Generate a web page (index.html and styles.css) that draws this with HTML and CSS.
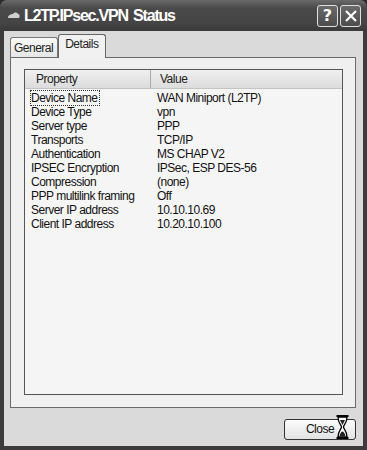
FILE: index.html
```html
<!DOCTYPE html>
<html lang="en">
  <head>
    <meta charset="UTF-8" />
    <title>L2TP.IPsec.VPN Status</title>
    <link rel="stylesheet" href="styles.css">
  </head>
  <body>
    <div class="window">
      <div class="titlebar">
        <svg class="app-icon" width="14" height="10" viewBox="0 0 14 10">
          <path d="M1 7 C1 4 4 3 6 3 C7 1 10 1 11 3 C13 3 13 6 12 7 Z" fill="#cfcfcf" />
        </svg>
        <span class="title">L2TP.IPsec.VPN Status</span>
        <div class="caption-buttons">
          <div class="cap-btn">?</div>
          <div class="cap-btn">
            <svg width="14" height="14" viewBox="0 0 14 14">
              <path d="M2 2 L12 12 M12 2 L2 12" stroke="#fff" stroke-width="2.2" />
            </svg>
          </div>
        </div>
      </div>

      <div class="client">
        <div class="tabs">
          <div class="tab">General</div>
          <div class="tab active">Details</div>
        </div>
        <div class="panel">
          <div class="listview">
            <div class="header">
              <div class="col-prop">Property</div>
              <div class="col-val">Value</div>
            </div>
            <div class="rows">
              <div class="row"><span class="prop"><span class="focus">Device Name</span></span><span class="val">WAN Miniport (L2TP)</span></div>
              <div class="row"><span class="prop">Device Type</span><span class="val">vpn</span></div>
              <div class="row"><span class="prop">Server type</span><span class="val">PPP</span></div>
              <div class="row"><span class="prop">Transports</span><span class="val">TCP/IP</span></div>
              <div class="row"><span class="prop">Authentication</span><span class="val">MS CHAP V2</span></div>
              <div class="row"><span class="prop">IPSEC Encryption</span><span class="val">IPSec, ESP DES-56</span></div>
              <div class="row"><span class="prop">Compression</span><span class="val">(none)</span></div>
              <div class="row"><span class="prop">PPP multilink framing</span><span class="val">Off</span></div>
              <div class="row"><span class="prop">Server IP address</span><span class="val">10.10.10.69</span></div>
              <div class="row"><span class="prop">Client IP address</span><span class="val">10.20.10.100</span></div>
            </div>
          </div>
        </div>
        <div class="footer">
          <div class="button">Close
            <svg class="hourglass" width="13" height="24" viewBox="0 0 13 24">
              <path d="M0.5 1 H12.5 M0.5 23 H12.5" stroke="#000" stroke-width="2" />
              <path d="M2 2 C2 8 5.5 10 5.5 12 C5.5 14 2 16 2 22 H11 C11 16 7.5 14 7.5 12 C7.5 10 11 8 11 2 Z" fill="#fff" stroke="#000" stroke-width="1.3" />
              <path d="M4 5 H9 L6.5 10 Z M3.5 21.5 C4 18 5.5 16.5 6.5 16.5 C7.5 16.5 9 18 9.5 21.5 Z" fill="#222" />
            </svg>
          </div>
        </div>
      </div>
    </div>
  </body>
</html>
```

FILE: styles.css
```css
html,
body {
  margin: 0;
  padding: 0;
  background: #2a2a2a;
}

body {
  font-family: "Liberation Sans", Arial, sans-serif;
  font-size: 12px;
  letter-spacing: -0.5px;
  color: #111;
}

.window {
  width: 367px;
  height: 450px;
  box-sizing: border-box;
  display: flex;
  flex-direction: column;
  background: #3c3c3c;
  border-radius: 7px 7px 0 0;
  overflow: hidden;
}

.titlebar {
  height: 31px;
  flex: none;
  display: flex;
  align-items: center;
  padding: 0 6px 0 7px;
  background: linear-gradient(#6a6a6a, #4a4a4a 25%, #444 75%, #3a3a3a);
}

.app-icon {
  margin-right: 3px;
  margin-top: 1px;
}

.title {
  flex: 1;
  color: #fff;
  font-family: "Liberation Sans", Arial, sans-serif;
  font-weight: bold;
  font-size: 16px;
  letter-spacing: -1.2px;
  word-spacing: 2px;
  margin-top: 1px;
}

.caption-buttons {
  display: flex;
  gap: 2px;
}

.cap-btn {
  width: 19px;
  height: 20px;
  border: 1px solid #e0e0e0;
  border-radius: 3px;
  background: linear-gradient(#6a6a6a, #4c4c4c);
  color: #fff;
  font-family: "DejaVu Sans", sans-serif;
  font-weight: bold;
  font-size: 16px;
  letter-spacing: 0;
  display: flex;
  align-items: center;
  justify-content: center;
}

.client {
  flex: 1;
  margin: 0 4px 4px 4px;
  background: #dadada;
  display: flex;
  flex-direction: column;
  padding: 2px 7px 0 6px;
}

.tabs {
  display: flex;
  align-items: flex-end;
  height: 24px;
  position: relative;
  z-index: 1;
}

.tab {
  height: 19px;
  padding: 0 4px 0 3px;
  line-height: 21px;
  border: 1px solid #777;
  border-bottom: none;
  border-radius: 3px 3px 0 0;
  background: linear-gradient(#fafafa, #e6e6e6);
  color: #222;
}

.tab.active {
  height: 23px;
  line-height: 19px;
  padding: 0 7px 0 6px;
  margin-bottom: -1px;
  background: #f1f1f1;
  border-color: #666;
}

.panel {
  height: 351px;
  box-sizing: border-box;
  border: 1px solid #6a6a6a;
  background: #f0f0f0;
  padding: 11px 12px 12px 13px;
}

.listview {
  height: 100%;
  box-sizing: border-box;
  border: 1px solid #555;
  background: #f5f5f5;
}

.header {
  display: flex;
  height: 18px;
  line-height: 19px;
  background: linear-gradient(#f0f0f0, #dcdcdc);
  border-bottom: 1px solid #c4c4c4;
  color: #222;
}

.col-prop {
  width: 126px;
  box-sizing: border-box;
  padding-left: 11px;
  border-right: 1px solid #aaa;
}

.col-val {
  padding-left: 9px;
}

.rows {
  padding-top: 2px;
}

.row {
  display: flex;
  height: 14px;
  line-height: 14px;
}

.prop {
  width: 126px;
  padding-left: 6px;
  flex: none;
}

.focus {
  outline: 1px dotted #333;
  padding: 0 1px 0 0;
}

.footer {
  flex: 1;
  display: flex;
  justify-content: flex-end;
  align-items: center;
}

.button {
  position: relative;
  width: 70px;
  height: 19px;
  line-height: 19px;
  border: 1px solid #333;
  border-radius: 3px;
  background: linear-gradient(#fcfcfc, #e2e2e2);
  text-align: center;
  font-size: 12px;
  margin-top: 4px;
}

.hourglass {
  position: absolute;
  right: 6px;
  top: -5px;
}
```
